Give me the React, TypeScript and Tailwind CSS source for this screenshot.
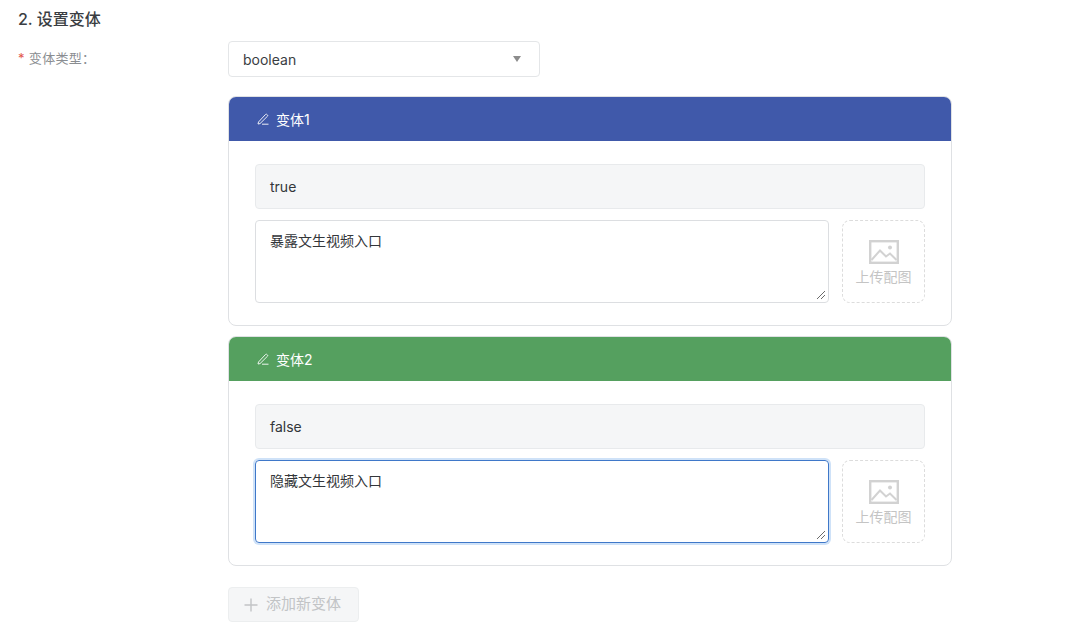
import React from 'react';

const fontStack = "font-['Inter','Noto_Sans_CJK_SC',sans-serif]";

const PenIcon = () => (
  <svg width="14" height="14" viewBox="0 0 14 14" fill="none" stroke="currentColor" strokeWidth="1" className="opacity-90">
    <path d="M2.5 10 L2 12 L4 11.6 L11.5 4.2 Q12 3.6 11.5 3 L10.8 2.4 Q10.2 1.9 9.6 2.4 Z" />
    <path d="M6 12.2 H12.5" />
  </svg>
);

const ImageIcon = () => (
  <svg width="30" height="24" viewBox="0 0 30 24" fill="none" className="text-[#d2d2d2]">
    <rect x="1.2" y="1.2" width="27.6" height="21.6" stroke="currentColor" strokeWidth="2.4" />
    <path d="M2.5 20 L11 10.5 L17 16.5 L21 13.5 L27.5 20" stroke="currentColor" strokeWidth="2" />
    <circle cx="21" cy="7.5" r="2" fill="currentColor" />
  </svg>
);

const ResizeHandle = () => (
  <svg width="10" height="10" viewBox="0 0 10 10" className="absolute bottom-[2px] right-[2px]" stroke="#6b6b6b" strokeWidth="1">
    <path d="M1 9 L9 1" />
    <path d="M5 9 L9 5" />
  </svg>
);

type VariantProps = {
  title: string;
  headerColor: string;
  value: string;
  desc: string;
  focused?: boolean;
};

const VariantCard = ({ title, headerColor, value, desc, focused }: VariantProps) => (
  <div className="w-[724px] rounded-[8px] border border-[#dfe1e4] bg-white overflow-hidden">
    <div className={`h-[44px] flex items-center gap-[6px] pl-[27px] text-white text-[14px] ${headerColor}`}>
      <PenIcon />
      <span>{title}</span>
    </div>
    <div className="px-[26px] pt-[23px] pb-[22px] flex flex-col gap-[11px]">
      <div className="h-[45px] rounded-[4px] border border-[#e8eaec] bg-[#f5f6f7] flex items-center px-[14px] text-[14px] text-[#33363a]">
        {value}
      </div>
      <div className="flex gap-[13px]">
        <div
          className={
            focused
              ? "relative flex-1 h-[83px] rounded-[4px] border border-[#3f78c9] shadow-[0_0_0_2px_#cfe2f8] px-[14px] py-[9px] text-[14px] text-[#33363a]"
              : "relative flex-1 h-[83px] rounded-[4px] border border-[#dcdee1] px-[14px] py-[9px] text-[14px] text-[#33363a]"
          }
        >
          {desc}
          <ResizeHandle />
        </div>
        <div className="w-[83px] h-[83px] rounded-[8px] border border-dashed border-[#dcdcdc] flex flex-col items-center justify-center gap-[4px] pt-[2px]">
          <ImageIcon />
          <span className="text-[14px] leading-[18px] text-[#c4c4c4]">上传配图</span>
        </div>
      </div>
    </div>
  </div>
);

export default function App() {
  return (
    <div className={`w-[1080px] h-[629px] overflow-hidden bg-white text-[#33363a] ${fontStack}`}>
      <div className="pl-[18px] pt-[9px]">
        <h2 className="text-[16px] leading-[20px] font-medium text-[#3a3d42]">2. 设置变体</h2>
      </div>
      <div className="flex pt-[12px] pl-[18px]">
        <div className="w-[210px] pt-[8px] text-[13px] leading-[18px] text-[#8a8d91] tracking-[0.3px]">
          <span className="text-[#e2574c] mr-[4px]">*</span>变体类型：
        </div>
        <div className="flex flex-col">
          <div className="w-[312px] h-[36px] rounded-[4px] border border-[#e4e6e8] flex items-center justify-between pl-[14px] pr-[18px] text-[14px] text-[#3a3d42]">
            <span>boolean</span>
            <span className="w-0 h-0 border-x-[4.5px] border-x-transparent border-t-[6px] border-t-[#8c8c8c]" />
          </div>
          <div className="flex flex-col gap-[10px] mt-[19px]">
            <VariantCard title="变体1" headerColor="bg-[#4059aa]" value="true" desc="暴露文生视频入口" />
            <VariantCard title="变体2" headerColor="bg-[#55a05f]" value="false" desc="隐藏文生视频入口" focused />
          </div>
          <div className="mt-[21px] w-[131px] h-[35px] rounded-[4px] border border-[#eceeef] bg-[#f5f6f7] flex items-center gap-[8px] pl-[15px] text-[15px] text-[#c2c4c6]">
            <svg width="14" height="14" viewBox="0 0 14 14" stroke="currentColor" strokeWidth="1.4">
              <path d="M7 0.5 V13.5 M0.5 7 H13.5" />
            </svg>
            <span>添加新变体</span>
          </div>
        </div>
      </div>
    </div>
  );
}
